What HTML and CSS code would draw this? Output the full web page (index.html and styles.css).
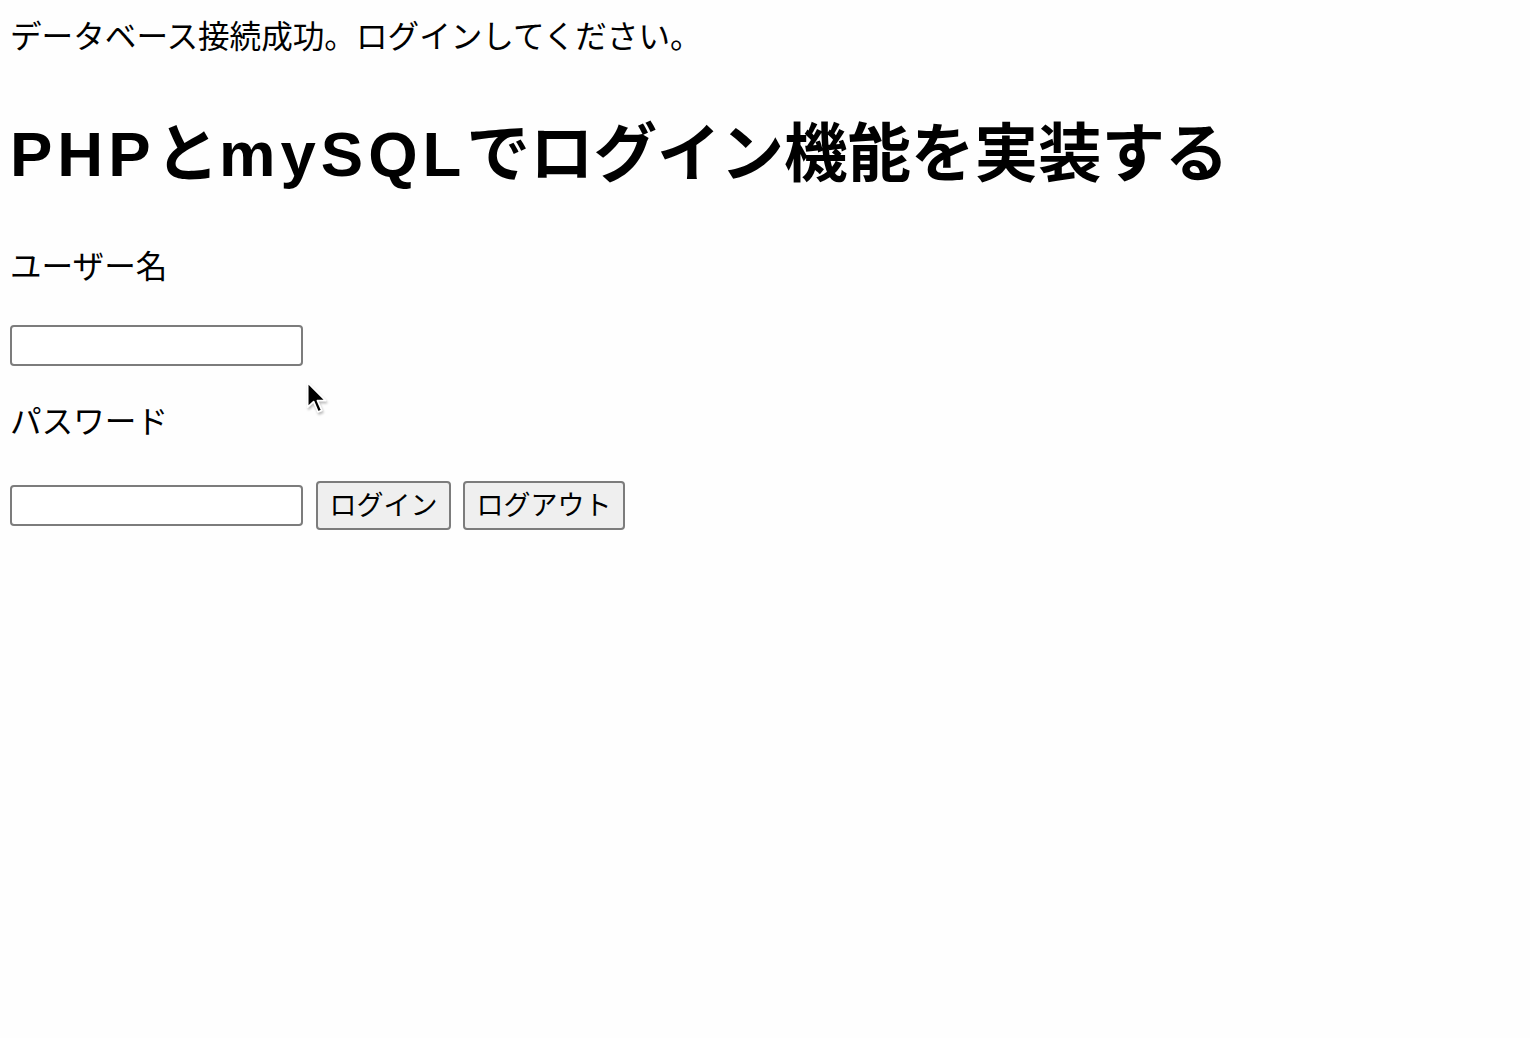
FILE: index.html
```html
<!DOCTYPE html>
<html lang="ja">
<head>
<meta charset="utf-8">
<title>ログイン</title>
<link rel="stylesheet" href="styles.css">
</head>
<body>
<div class="status">データベース接続成功。ログインしてください。</div>
<h1 class="title"><span class="latin">PHP</span>と<span class="latin">mySQL</span>でログイン機能を実装する</h1>
<form class="login-form">
  <label class="field-label" for="user">ユーザー名</label>
  <input class="text-input" id="user" type="text">
  <label class="field-label label-pass" for="pass">パスワード</label>
  <div class="action-row">
    <input class="text-input" id="pass" type="password">
    <button class="btn" type="button">ログイン</button>
    <button class="btn" type="button">ログアウト</button>
  </div>
</form>
<svg class="cursor" width="24" height="37" viewBox="0 0 22 34" aria-hidden="true">
  <path d="M1.5 1.5 L1.5 24 L7 19 L11 28.5 L14.5 27 L10.5 18 L18 18 Z" fill="#000" stroke="#fff" stroke-width="1.6" stroke-linejoin="round"/>
</svg>
</body>
</html>
```
FILE: styles.css
```css
html, body {
  background: #fefefe;
}
body {
  margin: 0;
  padding: 0 10px;
  color: #000;
  font-family: "Liberation Sans", "Noto Sans CJK JP", sans-serif;
  font-size: 31.6px;
  line-height: 36px;
  position: relative;
  min-height: 1038px;
  box-sizing: border-box;
}
.status {
  margin-top: 19px;
}
.title {
  margin: 63px 0 0;
  font-size: 63.5px;
  line-height: 72px;
  font-weight: bold;
}
.latin {
  letter-spacing: 5px;
}
.login-form {
  display: flex;
  flex-direction: column;
  align-items: flex-start;
}
.field-label {
  display: block;
  margin-top: 59px;
}
.label-pass {
  margin-top: 38px;
}
.text-input {
  box-sizing: border-box;
  width: 293px;
  height: 41px;
  margin: 40px 0 0;
  border: 2px solid #7c7c7c;
  border-radius: 4px;
  background: #fff;
  padding: 0 6px;
  font-size: 24px;
}
.action-row {
  display: flex;
  align-items: center;
  gap: 12px;
  margin-top: 41px;
}
.action-row .text-input {
  margin: 0 1px 0 0;
}
.btn {
  box-sizing: border-box;
  height: 49px;
  padding: 0 11.5px;
  border: 2px solid #7c7c7c;
  border-radius: 4px;
  background: #efefef;
  color: #000;
  font-family: "Liberation Sans", "Noto Sans CJK JP", sans-serif;
  font-size: 27px;
  line-height: 30px;
}
.cursor {
  position: absolute;
  left: 306px;
  top: 381px;
  filter: drop-shadow(1px 2px 1px rgba(0, 0, 0, 0.25));
}
```
